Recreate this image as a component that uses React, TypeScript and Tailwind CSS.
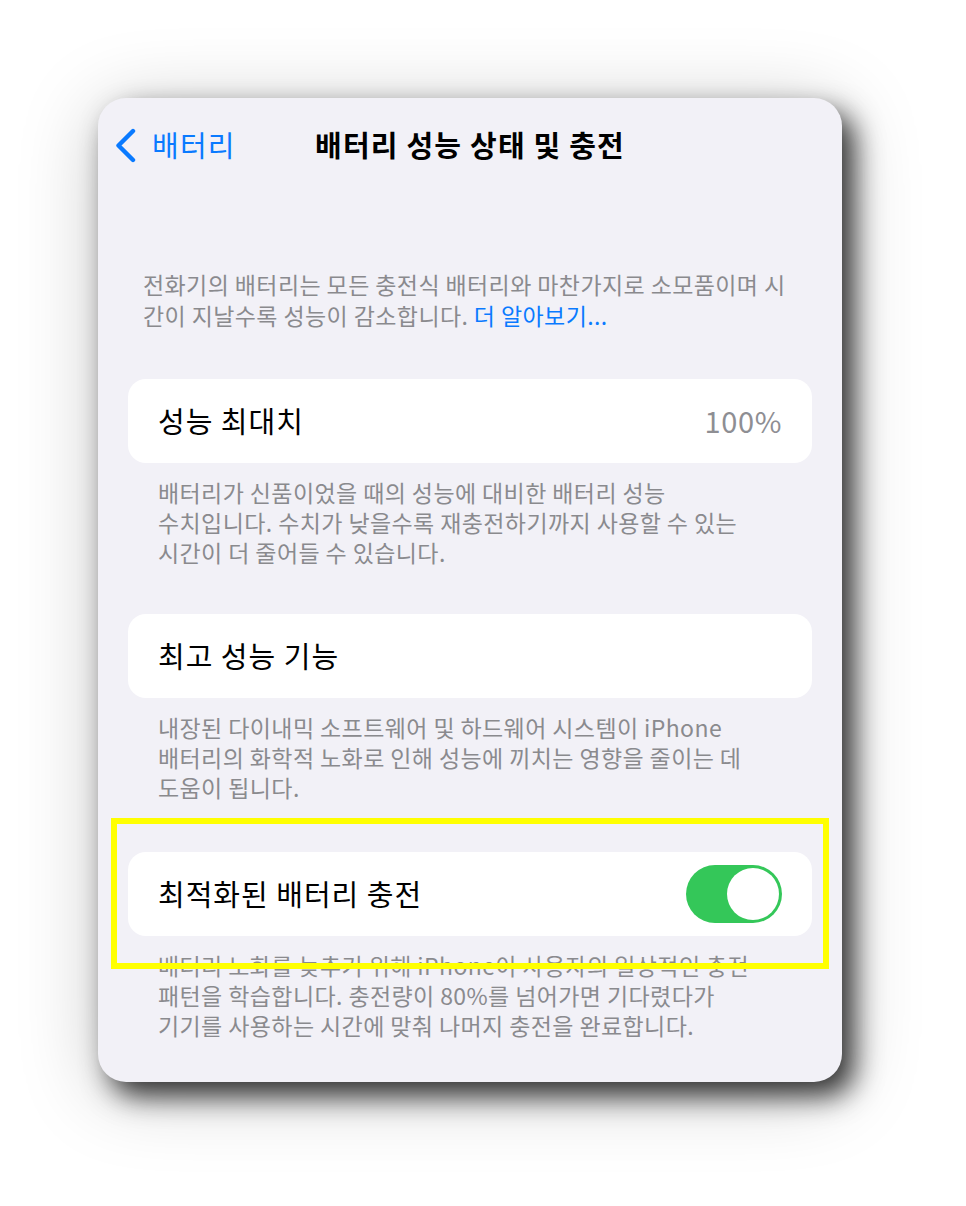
import React from 'react';

const font = { fontFamily: '"Noto Sans CJK KR", "Noto Sans", sans-serif' };

const Footer = ({ children }: { children: React.ReactNode }) => (
  <p className="mt-[14px] px-[30px] text-[23px] leading-[30px] tracking-[0.4px] text-[#8a8a8e]">{children}</p>
);

const Row = ({ label, right }: { label: string; right?: React.ReactNode }) => (
  <div className="flex h-[84px] items-center justify-between rounded-[18px] bg-white px-[30px]">
    <span className="text-[29px] tracking-[1px] text-black">{label}</span>
    {right}
  </div>
);

const Toggle = () => (
  <div className="flex h-[58px] w-[96px] items-center justify-end rounded-full bg-[#34c759] p-[3px]">
    <div className="h-[52px] w-[52px] rounded-full bg-white" />
  </div>
);

export default function App() {
  return (
    <div className="min-h-[1206px] w-full bg-white pl-[98px] pt-[98px]" style={font}>
      <div className="relative w-[744px] rounded-[28px] bg-[#f2f1f7] pb-[42px] shadow-[12px_14px_28px_rgba(0,0,0,0.78),0_10px_80px_rgba(0,0,0,0.22)]">
        {/* Nav bar */}
        <div className="grid h-[94px] grid-cols-[1fr_auto_1fr] items-center">
          <div className="flex items-center pl-[17px]">
            <svg width="21" height="35" viewBox="0 0 21 35" fill="none">
              <path d="M18 3 L3.5 17.5 L18 32" stroke="#0a7aff" strokeWidth="4.4" strokeLinecap="round" strokeLinejoin="round" />
            </svg>
            <span className="ml-[16px] text-[29px] tracking-[1.2px] text-[#0a7aff]">배터리</span>
          </div>
          <h1 className="text-[29px] font-bold tracking-[1.2px] text-black">배터리 성능 상태 및 충전</h1>
          <div />
        </div>

        {/* Intro */}
        <p className="mt-[77px] px-[45px] text-[23px] leading-[31px] tracking-[0.4px] text-[#8a8a8e]">
          전화기의 배터리는 모든 충전식 배터리와 마찬가지로 소모품이며 시<br />
          간이 지날수록 성능이 감소합니다. <span className="text-[#0a7aff]">더 알아보기...</span>
        </p>

        <div className="px-[30px]">
          <div className="mt-[48px]">
            <Row label="성능 최대치" right={<span className="text-[29px] tracking-[0.6px] text-[#8e8e93]">100%</span>} />
            <Footer>
              배터리가 신품이었을 때의 성능에 대비한 배터리 성능<br />
              수치입니다. 수치가 낮을수록 재충전하기까지 사용할 수 있는<br />
              시간이 더 줄어들 수 있습니다.
            </Footer>
          </div>

          <div className="mt-[47px]">
            <Row label="최고 성능 기능" />
            <Footer>
              내장된 다이내믹 소프트웨어 및 하드웨어 시스템이 iPhone<br />
              배터리의 화학적 노화로 인해 성능에 끼치는 영향을 줄이는 데<br />
              도움이 됩니다.
            </Footer>
          </div>

          <div className="mt-[50px]">
            <div className="relative">
              <Row label="최적화된 배터리 충전" right={<Toggle />} />
              {/* highlight box */}
              <div className="absolute -bottom-[33px] -left-[17px] -right-[17px] -top-[34px] z-10 border-[6px] border-[#ffff00]" />
            </div>
            <Footer>
              배터리 노화를 늦추기 위해 iPhone이 사용자의 일상적인 충전<br />
              패턴을 학습합니다. 충전량이 80%를 넘어가면 기다렸다가<br />
              기기를 사용하는 시간에 맞춰 나머지 충전을 완료합니다.
            </Footer>
          </div>
        </div>
      </div>
    </div>
  );
}
